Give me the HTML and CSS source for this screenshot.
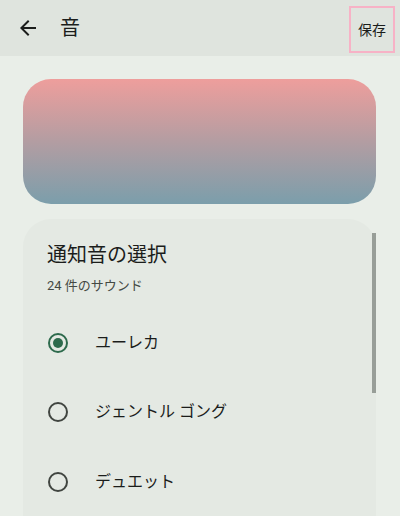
FILE: index.html
```
<!DOCTYPE html>
<html lang="ja">
<head>
<meta charset="utf-8">
<link rel="stylesheet" href="styles.css">
</head>
<body>
<header class="topbar">
  <button class="back" aria-label="戻る">
    <svg width="24" height="24" viewBox="0 0 24 24"><path d="M20 11H7.83l5.59-5.59L12 4l-8 8 8 8 1.41-1.41L7.83 13H20v-2z" fill="#1b1d1b"/></svg>
  </button>
  <h1 class="title">音</h1>
  <button class="save">保存</button>
</header>
<main class="content">
  <div class="banner"></div>
  <section class="card">
    <div class="scrollbar"></div>
    <h2 class="card-title">通知音の選択</h2>
    <p class="card-sub">24 件のサウンド</p>
    <ul class="list">
      <li class="row">
        <svg class="radio" width="20" height="20" viewBox="0 0 20 20"><circle cx="10" cy="10" r="9" fill="none" stroke="#2d6a4c" stroke-width="2"/><circle cx="10" cy="10" r="5" fill="#2d6a4c"/></svg>
        <span class="label">ユーレカ</span>
      </li>
      <li class="row">
        <svg class="radio" width="20" height="20" viewBox="0 0 20 20"><circle cx="10" cy="10" r="9" fill="none" stroke="#404540" stroke-width="2"/></svg>
        <span class="label">ジェントル ゴング</span>
      </li>
      <li class="row">
        <svg class="radio" width="20" height="20" viewBox="0 0 20 20"><circle cx="10" cy="10" r="9" fill="none" stroke="#404540" stroke-width="2"/></svg>
        <span class="label">デュエット</span>
      </li>
    </ul>
  </section>
</main>
</body>
</html>
```
FILE: styles.css
```
* { box-sizing: border-box; }
html, body {
  margin: 0;
  padding: 0;
  height: 100%;
  overflow: hidden;
}
body {
  background: #e9eee8;
  font-family: Roboto, "Noto Sans CJK JP", sans-serif;
  color: #1b1d1b;
}
.topbar {
  height: 56px;
  background: #dfe4de;
  display: flex;
  align-items: center;
  padding-left: 16px;
  padding-right: 5px;
}
.back {
  border: 0;
  background: none;
  padding: 0;
  width: 24px;
  height: 24px;
  display: flex;
}
.title {
  margin: 0 0 0 20px;
  font-size: 20px;
  font-weight: 400;
  line-height: 28px;
  flex: 1;
}
.save {
  border: 2.5px solid #f7b2c6;
  background: none;
  width: 46px;
  height: 47px;
  padding: 0;
  margin-top: 2px;
  font-family: Roboto, "Noto Sans CJK JP", sans-serif;
  font-size: 14px;
  color: #1b1d1b;
}
.content {
  padding: 23px 24px 0 23px;
}
.banner {
  height: 125px;
  border-radius: 28px;
  background: linear-gradient(180deg, #ee9e9c 0%, #b39da2 50%, #7b9eab 100%);
}
.card {
  position: relative;
  margin-top: 15px;
  background: #e4e9e3;
  border-radius: 28px 28px 0 0;
  padding: 22px 24px 0 24px;
  height: 320px;
}
.scrollbar {
  position: absolute;
  right: 0;
  top: 14px;
  width: 4px;
  height: 160px;
  background: #989e98;
}
.card-title {
  margin: 0;
  font-size: 20px;
  font-weight: 400;
  line-height: 28px;
}
.card-sub {
  margin: 7px 0 0 0;
  font-size: 13px;
  line-height: 20px;
  color: #444944;
}
.list {
  list-style: none;
  margin: 12px 0 0 0;
  padding: 0;
}
.row {
  height: 69.5px;
  display: flex;
  align-items: center;
  padding-left: 1px;
}
.radio {
  flex: none;
}
.label {
  margin-left: 27px;
  font-size: 16px;
  line-height: 24px;
}
```
